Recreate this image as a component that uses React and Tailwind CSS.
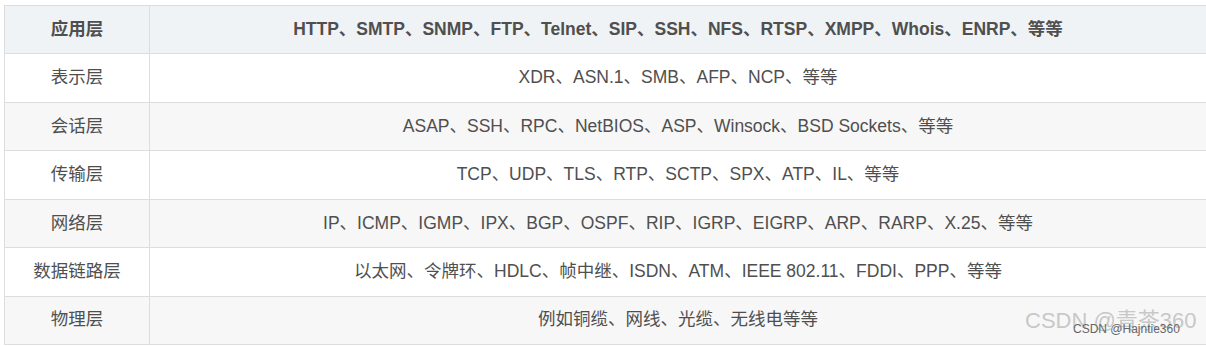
const rows = [
  ["表示层", "XDR、ASN.1、SMB、AFP、NCP、等等"],
  ["会话层", "ASAP、SSH、RPC、NetBIOS、ASP、Winsock、BSD Sockets、等等"],
  ["传输层", "TCP、UDP、TLS、RTP、SCTP、SPX、ATP、IL、等等"],
  ["网络层", "IP、ICMP、IGMP、IPX、BGP、OSPF、RIP、IGRP、EIGRP、ARP、RARP、X.25、等等"],
  ["数据链路层", "以太网、令牌环、HDLC、帧中继、ISDN、ATM、IEEE 802.11、FDDI、PPP、等等"],
  ["物理层", "例如铜缆、网线、光缆、无线电等等"],
];

export default function App() {
  return (
    <div
      className="relative w-[1206px] h-[346px] overflow-hidden bg-white text-[17.5px] text-[#4f4f4f]"
      style={{ fontFamily: '"Liberation Sans", Arial, "Noto Sans CJK SC", sans-serif' }}
    >
      <div className="pt-[5px] pl-[4px]">
        <table className="w-[1203px] border-collapse table-fixed">
          <colgroup>
            <col className="w-[145px]" />
            <col />
          </colgroup>
          <tbody>
            <tr className="bg-[#eff3f5] h-[48.43px]">
              <td className="border border-[#dddddd] text-center font-bold p-0 leading-none">应用层</td>
              <td className="border border-[#dddddd] text-center font-bold p-0 leading-none">
                HTTP、SMTP、SNMP、FTP、Telnet、SIP、SSH、NFS、RTSP、XMPP、Whois、ENRP、等等
              </td>
            </tr>
            {rows.map(([a, b], i) => (
              <tr key={a} className={i % 2 === 0 ? "bg-white h-[48.43px]" : "bg-[#f7f7f7] h-[48.43px]"}>
                <td className="border border-[#dddddd] text-center p-0 leading-none">{a}</td>
                <td className="border border-[#dddddd] text-center p-0 leading-none">{b}</td>
              </tr>
            ))}
          </tbody>
        </table>
      </div>
      <div className="absolute left-[1025px] top-[310px] text-[22px] leading-none text-[#c8c8c8] whitespace-nowrap">
        CSDN @青茶360
      </div>
      <div className="absolute left-[1073px] top-[323px] text-[12px] leading-none text-[#666666] whitespace-nowrap">
        CSDN @Hajntie360
      </div>
    </div>
  );
}
